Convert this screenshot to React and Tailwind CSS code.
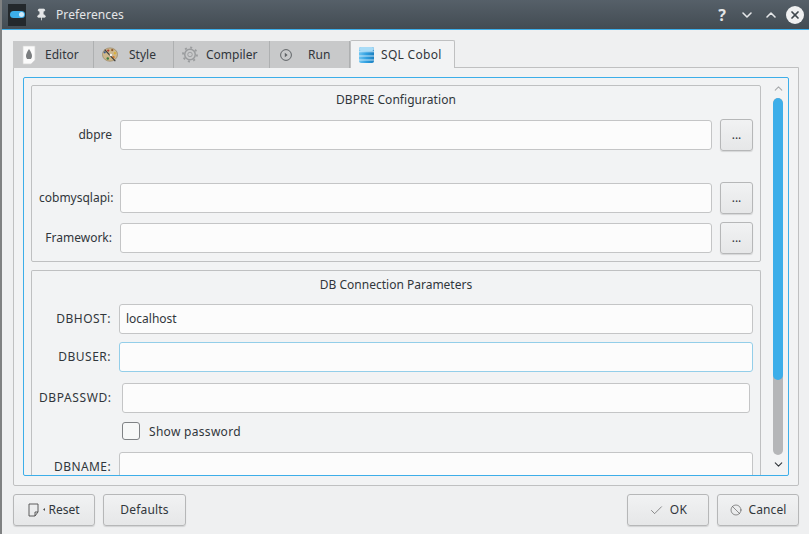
import { Check, ChevronDown, ChevronUp, Ban, Pin, X } from 'lucide-react'

function Field({ focused, value, className = '' }) {
  return (
    <div
      className={`flex h-[30px] flex-1 items-center rounded-[3px] border bg-[#fcfcfc] px-[6px] ${
        focused ? 'border-[#93cee9]' : 'border-[#c4c5c6]'
      } ${className}`}
    >
      {value}
    </div>
  )
}

function Browse() {
  return (
    <button
      type="button"
      className="ml-2 flex h-[32px] w-[33px] items-center justify-center rounded-[3px] border border-[#b6b7b8] bg-gradient-to-b from-[#f1f2f3] to-[#e6e7e8] text-[12px] shadow-[0_1px_1px_rgba(0,0,0,0.12)]"
    >
      ...
    </button>
  )
}

function PathRow({ label, className = '' }) {
  return (
    <div className={`flex items-center ${className}`}>
      <span className="w-[73px] shrink-0 text-right">{label}</span>
      <Field className="ml-[8px]" />
      <Browse />
    </div>
  )
}

function DialogButton({ children, className = '' }) {
  return (
    <button
      type="button"
      className={`flex h-[32px] items-center justify-center rounded-[3px] border border-[#b6b7b8] bg-gradient-to-b from-[#f1f2f3] to-[#e6e7e8] shadow-[0_1px_1px_rgba(0,0,0,0.12)] ${className}`}
    >
      {children}
    </button>
  )
}

function EditorIcon() {
  return (
    <svg width="14" height="20" viewBox="0 0 14 20">
      <path d="M1 1h12v14l-4 4H1z" fill="#fbfbfb" stroke="#d5d5d5" strokeWidth="0.7" />
      <path d="M7 4c2 3 3 5 3 7s-1 2-1 3H5c0-1-1-1-1-3s1-4 3-7z" fill="#7b7e80" />
    </svg>
  )
}

function PaletteIcon() {
  return (
    <svg width="18" height="18" viewBox="0 0 18 18">
      <ellipse cx="9" cy="8.5" rx="8.5" ry="7.5" fill="#cdb78d" stroke="#8a7448" strokeWidth="0.6" />
      <circle cx="7" cy="4" r="1.3" fill="#b03a2e" />
      <circle cx="11.5" cy="3.5" r="1.3" fill="#8e5a2b" />
      <circle cx="14.5" cy="7" r="1.3" fill="#d8b13a" />
      <circle cx="3" cy="6" r="1.3" fill="#3b5b92" />
      <circle cx="6.5" cy="13" r="1.4" fill="#3f7f3f" />
      <circle cx="13" cy="11.5" r="1.3" fill="#d87a2c" />
      <path d="M3 3l12 13" stroke="#3a3a3a" strokeWidth="1.3" />
      <circle cx="10" cy="9" r="1.4" fill="#f3f3f3" />
    </svg>
  )
}

function GearIcon() {
  return (
    <svg width="17" height="17" viewBox="0 0 17 17" fill="none" stroke="#9a9c9e" strokeWidth="1">
      <circle cx="8.5" cy="8.5" r="2.4" />
      <circle cx="8.5" cy="8.5" r="5.6" strokeWidth="1.6" />
      <circle cx="8.5" cy="8.5" r="7.4" strokeWidth="2" strokeDasharray="2.2 3.6" />
    </svg>
  )
}

function RunIcon() {
  return (
    <svg width="12" height="12" viewBox="0 0 12 12" fill="none">
      <circle cx="6" cy="6" r="5.4" stroke="#5f6366" />
      <path d="M4.8 3.8L7.6 6 4.8 8.2z" fill="#5f6366" />
    </svg>
  )
}

function DatabaseIcon() {
  return (
    <svg width="15" height="16" viewBox="0 0 15 16">
      <defs>
        <linearGradient id="db" x1="0" y1="0" x2="1" y2="0">
          <stop offset="0" stopColor="#6cc4f2" />
          <stop offset="0.5" stopColor="#2f9fe0" />
          <stop offset="1" stopColor="#1b7fc0" />
        </linearGradient>
      </defs>
      <rect width="15" height="16" rx="2" fill="url(#db)" />
      <rect width="15" height="4" rx="2" fill="#a9dcf7" />
      <rect y="4.4" width="15" height="0.8" fill="#e6f5fd" />
      <rect y="8.6" width="15" height="0.8" fill="#e6f5fd" />
      <rect y="12.6" width="15" height="0.8" fill="#e6f5fd" />
    </svg>
  )
}

function ResetIcon() {
  return (
    <svg width="18" height="14" viewBox="0 0 18 14" fill="none">
      <path d="M1 1h9v8l-3 4H1z" stroke="#4d4d4d" strokeWidth="0.9" />
      <path d="M10 9H7v4" stroke="#4d4d4d" strokeWidth="0.9" />
      <path d="M17 5v3l-2-1.5z" fill="#4d4d4d" />
    </svg>
  )
}

function Tab({ icon, label, width, gap }) {
  return (
    <div
      className={`flex h-[27px] items-center border-r border-[#aeb0b1] bg-[#c8c9ca] pl-[8px] ${width}`}
    >
      <span className={`flex w-[16px] justify-center ${gap}`}>{icon}</span>
      <span>{label}</span>
    </div>
  )
}

export default function App() {
  return (
    <div className="flex h-[534px] w-[809px] flex-col overflow-hidden border-l-2 border-[#7f8182] bg-[#eff0f1] font-['Noto_Sans',sans-serif] text-[12px] text-[#31363b]">
      {/* Title bar */}
      <div className="flex h-[30px] shrink-0 items-center border-b border-[#3daee9] bg-gradient-to-b from-[#566069] to-[#434c53] pl-[6px] text-[#e4e6e8]">
        <div className="flex h-[22px] w-[18px] items-center justify-center bg-[#23282c]">
          <span className="relative block h-[7px] w-[15px] rounded-full bg-[#3daee9]">
            <span className="absolute right-[1px] top-[1px] h-[5px] w-[5px] rounded-full bg-[#cfeafa]" />
          </span>
        </div>
        <Pin size={13} className="ml-[9px]" fill="#e4e6e8" strokeWidth={1.5} />
        <span className="ml-[8px] pt-[1px] tracking-[0.1px]">Preferences</span>
        <div className="ml-auto flex items-center pr-[5px]">
          <span className="text-[16px] font-bold leading-none">?</span>
          <ChevronDown size={16} strokeWidth={2.4} className="ml-[13px]" />
          <ChevronUp size={16} strokeWidth={2.4} className="ml-[8px]" />
          <span className="ml-[7px] flex h-[18px] w-[18px] items-center justify-center rounded-full bg-[#eff0f1]">
            <X size={12} strokeWidth={3.5} className="text-[#3f474d]" />
          </span>
        </div>
      </div>

      <div className="flex min-h-0 flex-1 flex-col pl-[11px] pr-[10px] pt-[10px]">
        {/* Tabs */}
        <div className="z-10 -mb-px flex h-[28px] shrink-0 items-end">
          <Tab icon={<EditorIcon />} label="Editor" width="w-[81px]" gap="mr-[8px]" />
          <Tab icon={<PaletteIcon />} label="Style" width="w-[80px]" gap="mr-[11px]" />
          <Tab icon={<GearIcon />} label="Compiler" width="w-[96px]" gap="mr-[8px]" />
          <Tab icon={<RunIcon />} label="Run" width="w-[80px]" gap="mr-[14px]" />
          <div className="flex h-[28px] w-[105px] items-center rounded-t-[2px] border border-b-0 border-[#bfc0c1] bg-[#f2f3f4] pl-[8px]">
            <DatabaseIcon />
            <span className="ml-[7px] tracking-[0.3px]">SQL Cobol</span>
          </div>
        </div>

        {/* Tab panel */}
        <div className="h-[419px] shrink-0 rounded-b-[2px] border border-[#bfc0c1] bg-[#f2f3f4] p-[9px]">
          <div className="flex h-[399px] overflow-hidden rounded-[2px] border border-[#3daee9]">
            <div className="min-w-0 flex-1 overflow-hidden pl-[7px] pt-[7px]">
              <div className="h-[177px] rounded-[2px] border border-[#bfc0c1] px-[7px]">
                <div className="pt-[5px] text-center leading-[17px] tracking-[0.05px]">DBPRE Configuration</div>
                <PathRow label="dbpre" className="mt-[11px]" />
                <PathRow label="cobmysqlapi:" className="mt-[31px]" />
                <PathRow label="Framework:" className="mt-[8px]" />
              </div>

              <div className="mt-[8px] h-[240px] rounded-t-[2px] border border-b-0 border-[#bfc0c1] px-[7px]">
                <div className="pt-[5px] text-center leading-[17px]">DB Connection Parameters</div>
                <div className="mt-[11px] flex items-center">
                  <span className="w-[72px] shrink-0 text-right tracking-[0.5px]">DBHOST:</span>
                  <Field className="ml-[8px]" value="localhost" />
                </div>
                <div className="mt-[8px] flex items-center">
                  <span className="w-[72px] shrink-0 text-right tracking-[0.5px]">DBUSER:</span>
                  <Field className="ml-[8px]" focused />
                </div>
                <div className="mt-[11px] flex items-center pr-[3px]">
                  <span className="w-[72px] shrink-0 text-right tracking-[0.6px]">DBPASSWD:</span>
                  <Field className="ml-[11px]" />
                </div>
                <div className="ml-[83px] mt-[9px] flex h-[18px] items-center">
                  <span className="h-[18px] w-[18px] rounded-[3px] border border-[#7f8285] bg-[#f7f8f8]" />
                  <span className="ml-[9px] pt-[1px] tracking-[0.3px]">Show password</span>
                </div>
                <div className="mt-[12px] flex items-center">
                  <span className="w-[72px] shrink-0 text-right tracking-[0.4px]">DBNAME:</span>
                  <Field className="ml-[8px]" />
                </div>
              </div>
            </div>

            {/* Scrollbar */}
            <div className="flex w-[27px] shrink-0 flex-col items-center pl-[7px] text-[#31363b]">
              <ChevronUp size={13} strokeWidth={2} className="mt-[4px] text-[#a9abad]" />
              <div className="mt-[3px] flex h-[357px] w-[10px] shrink-0 flex-col overflow-hidden rounded-full bg-[#b5b6b8]">
                <div className="h-[282px] rounded-full bg-[#3daee9]" />
              </div>
              <ChevronDown size={13} strokeWidth={2} className="mt-[3px]" />
            </div>
          </div>
        </div>

        {/* Buttons */}
        <div className="mt-[8px] flex items-center">
          <DialogButton className="w-[82px] gap-[2px]">
            <ResetIcon />
            Reset
          </DialogButton>
          <DialogButton className="ml-[8px] w-[83px] tracking-[0.2px]">Defaults</DialogButton>
          <DialogButton className="ml-auto w-[82px] gap-[6px]">
            <Check size={15} strokeWidth={1} className="text-[#4d4d4d]" />
            <span className="tracking-[0.4px]">OK</span>
          </DialogButton>
          <DialogButton className="ml-[8px] w-[82px] gap-[7px]">
            <Ban size={12} strokeWidth={1.2} className="text-[#4d4d4d]" />
            <span className="tracking-[0.1px]">Cancel</span>
          </DialogButton>
        </div>
      </div>
    </div>
  )
}
